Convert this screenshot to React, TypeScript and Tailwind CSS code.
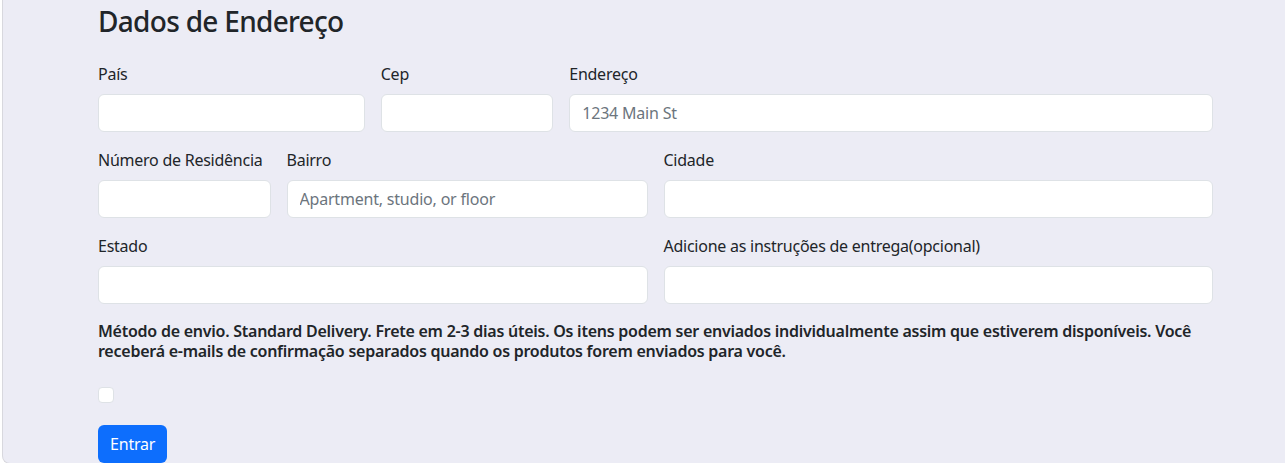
import { useState } from 'react';

const labelCls = 'block mb-2 text-base leading-6 tracking-[-0.25px] text-[#212529]';
const inputCls =
  'block w-full h-[38px] px-3 rounded-md border border-[#dee2e6] bg-white text-base tracking-[-0.2px] text-[#212529] placeholder:text-[#6c757d] outline-none';

function Field({ label, placeholder, span }: { label: string; placeholder?: string; span: string }) {
  return (
    <div className={span}>
      <label className={labelCls}>{label}</label>
      <input className={inputCls} placeholder={placeholder} />
    </div>
  );
}

export default function App() {
  const [agree, setAgree] = useState(false);

  return (
    <div className="min-h-screen bg-white pl-[2px] font-['Noto_Sans',sans-serif] text-[#212529]">
      <div className="bg-[#ececf5] border border-t-0 border-r-0 border-[#d8d8de] rounded-bl-lg pl-[95px] pr-[72px] pt-[5px]">
        <h3 className="text-[28px] leading-[1.2] font-medium tracking-[-0.7px] mb-[23px]">Dados de Endereço</h3>

        <div className="grid grid-cols-12 gap-x-4 gap-y-4">
          <Field label="País" span="col-span-3" />
          <Field label="Cep" span="col-span-2" />
          <Field label="Endereço" placeholder="1234 Main St" span="col-span-7" />

          <Field label="Número de Residência" span="col-span-2" />
          <Field label="Bairro" placeholder="Apartment, studio, or floor" span="col-span-4" />
          <Field label="Cidade" span="col-span-6" />

          <Field label="Estado" span="col-span-6" />
          <Field label="Adicione as instruções de entrega(opcional)" span="col-span-6" />
        </div>

        <h6 className="mt-[17px] text-base leading-[1.25] font-semibold tracking-[-0.25px]">
          Método de envio. Standard Delivery. Frete em 2-3 dias úteis. Os itens podem ser enviados
          individualmente assim que estiverem disponíveis. Você receberá e-mails de confirmação
          separados quando os produtos forem enviados para você.
        </h6>

        <div className="mt-[22px] h-6 flex items-center">
          <input
            type="checkbox"
            checked={agree}
            onChange={(e) => setAgree(e.target.checked)}
            className="appearance-none w-4 h-4 rounded border border-[#dee2e6] bg-white checked:bg-[#0d6efd]"
          />
        </div>

        <button className="mt-[18px] h-[38px] px-3 rounded-md bg-[#0d6efd] text-white text-base leading-6 tracking-[-0.2px]">
          Entrar
        </button>
      </div>
    </div>
  );
}
